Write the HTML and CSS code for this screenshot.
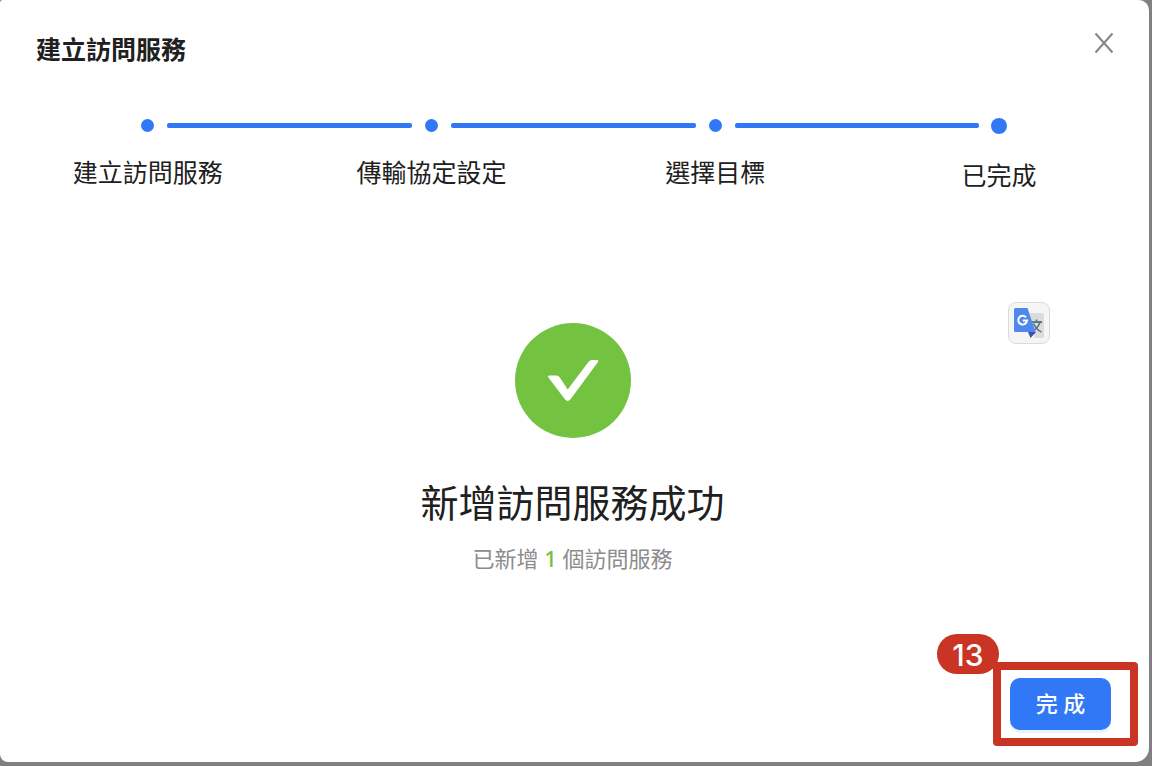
FILE: index.html
```
<!DOCTYPE html>
<html lang="zh-Hant">
<head>
<meta charset="utf-8">
<meta name="viewport" content="width=device-width, initial-scale=1">
<title>建立訪問服務</title>
<link rel="stylesheet" href="styles.css">
</head>
<body>
<main class="modal">
  <header class="modal-header">
    <h1 class="modal-title">建立訪問服務</h1>
    <button class="close" type="button" aria-label="關閉">
      <svg width="20" height="22" viewBox="0 0 20 22"><path d="M1.500 1.500 18.500 20.500M18.500 1.500 1.500 20.500" fill="none" stroke="#858585" stroke-width="2"/></svg>
    </button>
  </header>

  <ol class="steps">
    <li class="step"><span class="rail"><span class="dot"></span></span><span class="label">建立訪問服務</span></li>
    <li class="step"><span class="rail"><span class="dot"></span></span><span class="label">傳輸協定設定</span></li>
    <li class="step"><span class="rail"><span class="dot"></span></span><span class="label">選擇目標</span></li>
    <li class="step current" aria-current="step"><span class="rail"><span class="dot"></span></span><span class="label">已完成</span></li>
  </ol>

  <section class="result">
    <svg class="result-icon" width="116" height="115" viewBox="0 0 116 115" aria-hidden="true">
      <ellipse cx="58" cy="57.500" rx="58" ry="57.500" fill="#73c240"/>
      <path d="M34 52.500H41.500Q43.500 52.500 44.800 54.500L52.700 66.500 73.200 39.200Q74.700 37 77 37H82.500Q84 37.200 83 39L55.500 76.300Q52.700 79.500 49.900 76.300L33.200 54.300Q32.600 52.700 34 52.500Z" fill="#fff"/>
    </svg>
    <h2 class="result-title">新增訪問服務成功</h2>
    <p class="result-text">已新增 <span class="count">1</span> 個訪問服務</p>
  </section>

  <footer class="modal-footer">
    <div class="marked">
      <button class="primary" type="button">完 成</button>
      <span class="frame"></span>
      <span class="badge">13</span>
    </div>
  </footer>

  <button class="translate" type="button" aria-label="翻譯">
    <svg width="32" height="32" viewBox="0 0 32 32">
      <path d="M14 6H29Q31 6 31 8V29Q31 31 29 31H22Z" fill="#dcdcdc"/>
      <path d="M18 15H29M23.500 12.500V15M27 15Q25 21.500 18.500 25M20.500 16.500Q23 22.500 28.500 25" fill="none" stroke="#607988" stroke-width="1.800"/>
      <path d="M15 25H23L17.500 31Z" fill="#3b50b5"/>
      <path d="M2.500 1H14.500L22.500 25H2.500Q1 25 1 23.500V2.500Q1 1 2.500 1Z" fill="#4f87ed"/>
      <path d="M13 10.300A4.400 4.400 0 1 0 14 13.600H9.800" fill="none" stroke="#fff" stroke-width="2"/>
    </svg>
  </button>
</main>
</body>
</html>
```
FILE: styles.css
```
* {
  box-sizing: border-box;
}

body {
  margin: 0;
  padding: 0 3px 4px 0;
  background: #808080;
  color: #202020;
  font-family: "Noto Sans", "Noto Sans CJK TC", sans-serif;
}

button {
  font: inherit;
  border: 0;
  padding: 0;
  cursor: pointer;
}

svg {
  display: block;
}

.modal {
  position: relative;
  display: flex;
  flex-direction: column;
  min-height: calc(100vh - 4px);
  background: #fff;
  border-radius: 3px 10px 14px 8px;
}

.modal-header {
  display: flex;
  justify-content: space-between;
  align-items: flex-start;
  padding: 32px 35px 0 36px;
}

.modal-title {
  margin: 0;
  font-size: 25px;
  line-height: 34px;
  font-weight: 700;
}

.close {
  background: none;
}

.steps {
  display: grid;
  grid-template-columns: repeat(4, 1fr);
  margin: 0;
  padding: 52px 8px 0 6px;
  list-style: none;
}

.step {
  display: flex;
  flex-direction: column;
  align-items: stretch;
  gap: 22px;
  text-align: center;
  font-size: 25px;
  line-height: 34px;
}

.rail {
  display: flex;
  align-items: center;
  gap: 13px;
  height: 15px;
}

.rail::before,
.rail::after {
  content: "";
  flex: 1;
  height: 5px;
  background: #3178f7;
}

.rail::before {
  border-radius: 0 2px 2px 0;
}

.rail::after {
  border-radius: 2px 0 0 2px;
}

.step:first-child .rail::before,
.step:last-child .rail::after {
  visibility: hidden;
}

.dot {
  width: 13px;
  height: 13px;
  border-radius: 50%;
  background: #3178f7;
}

.current {
  gap: 25px;
}

.current .rail {
  gap: 12px;
}

.current .dot {
  width: 16px;
  height: 16px;
}

.result {
  display: flex;
  flex-direction: column;
  align-items: center;
  padding: 131px 40px 0 36px;
  text-align: center;
}

.result-title {
  margin: 38px 0 0;
  font-size: 38px;
  line-height: 52px;
  font-weight: 400;
}

.result-text {
  margin: 14px 0 0;
  color: #8c8c8c;
  font-size: 22px;
  line-height: 32px;
}

.count {
  color: #73c240;
  font-weight: 500;
}

.modal-footer {
  display: flex;
  justify-content: flex-end;
  margin-top: auto;
  padding: 40px 38px 32px;
}

.marked {
  position: relative;
}

.primary {
  display: block;
  min-width: 101px;
  height: 52px;
  padding: 0 24px 2px;
  border-radius: 10px;
  background: #3178f7;
  box-shadow: 0 3px 0 #eaf4ff;
  color: #fff;
  font-size: 22px;
  font-weight: 500;
  line-height: 50px;
}

.frame {
  position: absolute;
  inset: -16px -27px -16px -17px;
  border: 8px solid #c93424;
  border-radius: 4px;
  pointer-events: none;
}

.badge {
  position: absolute;
  top: -44px;
  left: -73px;
  width: 62px;
  height: 40px;
  border-radius: 20px;
  background: #c93424;
  color: #fff;
  font-family: Inter, sans-serif;
  font-size: 30px;
  font-weight: 500;
  line-height: 42px;
  text-align: center;
}

.translate {
  position: absolute;
  top: 302px;
  right: 99px;
  display: grid;
  place-items: center;
  width: 42px;
  height: 42px;
  border: 1px solid #dadada;
  border-radius: 8px;
  background: #f5f5f5;
}
```
